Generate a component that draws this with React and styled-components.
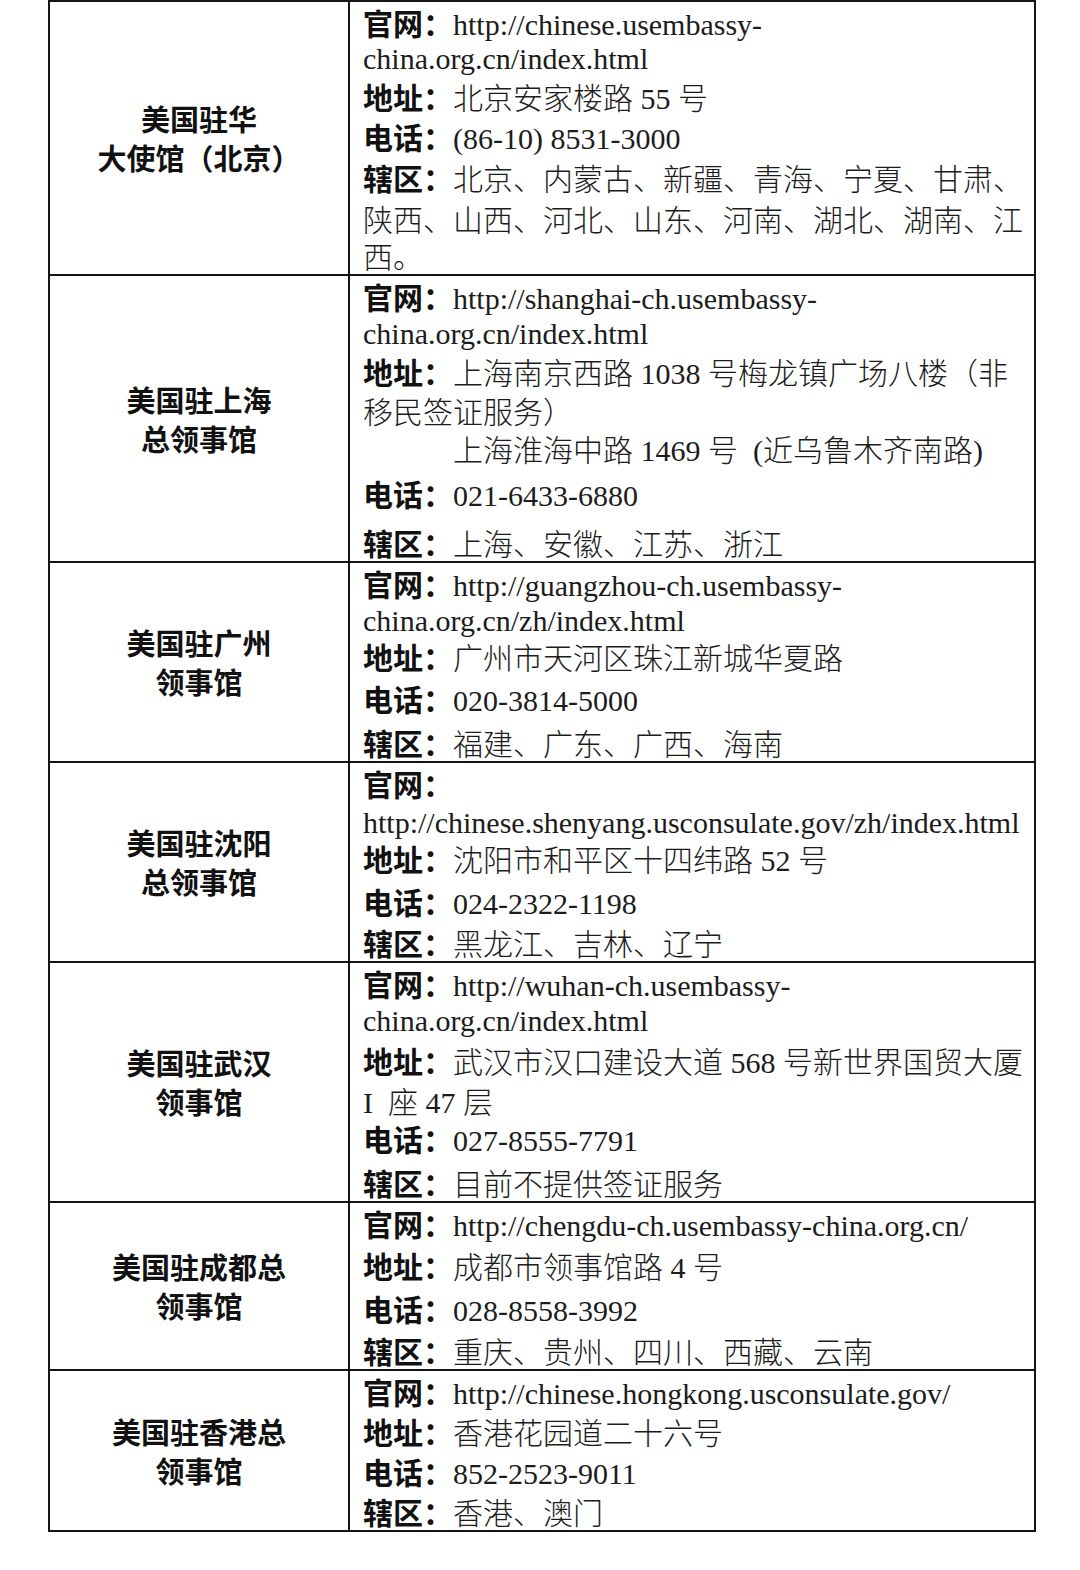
import styled, { createGlobalStyle } from "styled-components";

const GlobalStyle = createGlobalStyle`
  body {
    margin: 0;
    background: #fff;
    color: #111;
  }
`;

// gap = shift of a line against the default 40px step
const rows = [
  {
    name: ["美国驻华", "大使馆（北京）"],
    lines: [
      { label: "官网", text: "http://chinese.usembassy-" },
      { text: "china.org.cn/index.html", gap: -6 },
      { label: "地址", text: "北京安家楼路 55 号" },
      { label: "电话", text: "(86-10) 8531-3000" },
      { label: "辖区", text: "北京、内蒙古、新疆、青海、宁夏、甘肃、", gap: 1 },
      { text: "陕西、山西、河北、山东、河南、湖北、湖南、江", gap: 1 },
      { text: "西。", gap: -3 },
    ],
  },
  {
    name: ["美国驻上海", "总领事馆"],
    lines: [
      { label: "官网", text: "http://shanghai-ch.usembassy-" },
      { text: "china.org.cn/index.html", gap: -5 },
      { label: "地址", text: "上海南京西路 1038 号梅龙镇广场八楼（非" },
      { text: "移民签证服务）", gap: -1 },
      { text: "上海淮海中路 1469 号  (近乌鲁木齐南路)", indent: true, gap: -2 },
      { label: "电话", text: "021-6433-6880", gap: 5 },
      { label: "辖区", text: "上海、安徽、江苏、浙江", gap: 9 },
    ],
  },
  {
    name: ["美国驻广州", "领事馆"],
    lines: [
      { label: "官网", text: "http://guangzhou-ch.usembassy-" },
      { text: "china.org.cn/zh/index.html", gap: -5 },
      { label: "地址", text: "广州市天河区珠江新城华夏路", gap: -2 },
      { label: "电话", text: "020-3814-5000", gap: 2 },
      { label: "辖区", text: "福建、广东、广西、海南", gap: 4 },
    ],
  },
  {
    name: ["美国驻沈阳", "总领事馆"],
    lines: [
      { label: "官网", text: "" },
      { text: "http://chinese.shenyang.usconsulate.gov/zh/index.html", gap: -3 },
      { label: "地址", text: "沈阳市和平区十四纬路 52 号", gap: -2 },
      { label: "电话", text: "024-2322-1198", gap: 3 },
      { label: "辖区", text: "黑龙江、吉林、辽宁", gap: 1 },
    ],
  },
  {
    name: ["美国驻武汉", "领事馆"],
    lines: [
      { label: "官网", text: "http://wuhan-ch.usembassy-" },
      { text: "china.org.cn/index.html", gap: -5 },
      { label: "地址", text: "武汉市汉口建设大道 568 号新世界国贸大厦", gap: 2 },
      { text: "I  座 47 层" },
      { label: "电话", text: "027-8555-7791", gap: -2 },
      { label: "辖区", text: "目前不提供签证服务", gap: 4 },
    ],
  },
  {
    name: ["美国驻成都总", "领事馆"],
    lines: [
      { label: "官网", text: "http://chengdu-ch.usembassy-china.org.cn/" },
      { label: "地址", text: "成都市领事馆路 4 号", gap: 2 },
      { label: "电话", text: "028-8558-3992", gap: 3 },
      { label: "辖区", text: "重庆、贵州、四川、西藏、云南", gap: 2 },
    ],
  },
  {
    name: ["美国驻香港总", "领事馆"],
    lines: [
      { label: "官网", text: "http://chinese.hongkong.usconsulate.gov/" },
      { label: "地址", text: "香港花园道二十六号" },
      { label: "电话", text: "852-2523-9011" },
      { label: "辖区", text: "香港、澳门" },
    ],
  },
];

function App() {
  return (
    <>
      <GlobalStyle />
      <Table>
        <colgroup>
          <col style={{ width: 300 }} />
          <col />
        </colgroup>
        <tbody>
          {rows.map((row) => (
            <tr key={row.name.join("")}>
              <NameCell>
                {row.name.map((n) => (
                  <NameLine key={n}>{n}</NameLine>
                ))}
              </NameCell>
              <InfoCell>
                {row.lines.map((line, i) => (
                  <Line key={i} $gap={line.gap || 0} $indent={line.indent}>
                    {line.label && <Label>{line.label}：</Label>}
                    {line.text}
                  </Line>
                ))}
              </InfoCell>
            </tr>
          ))}
        </tbody>
      </Table>
    </>
  );
}

const Table = styled.table`
  margin-left: 48px;
  width: 988px;
  border-collapse: collapse;
  table-layout: fixed;

  td {
    border: 2px solid #141414;
    padding: 0;
  }
`;

const NameCell = styled.td`
  vertical-align: middle;
  text-align: center;
`;

const NameLine = styled.div`
  font-family: "Noto Sans CJK SC", sans-serif;
  font-weight: 700;
  font-size: 29px;
  line-height: 39px;
  color: #111;
`;

const InfoCell = styled.td`
  vertical-align: top;
  padding: 3px 0 0 13px !important;
`;

const Line = styled.div`
  font-family: "Liberation Serif", "Noto Sans CJK SC", serif;
  font-weight: 300;
  font-size: 30px;
  line-height: 40px;
  height: 40px;
  white-space: pre;
  color: #1c1c1c;
  margin-top: ${(p) => p.$gap}px;
  padding-left: ${(p) => (p.$indent ? "90px" : "0")};

  &:last-child {
    margin-bottom: -4px;
  }
`;

const Label = styled.span`
  font-family: "Noto Sans CJK SC", sans-serif;
  font-weight: 700;
  line-height: 1;
  color: #111;
`;

export default App;
